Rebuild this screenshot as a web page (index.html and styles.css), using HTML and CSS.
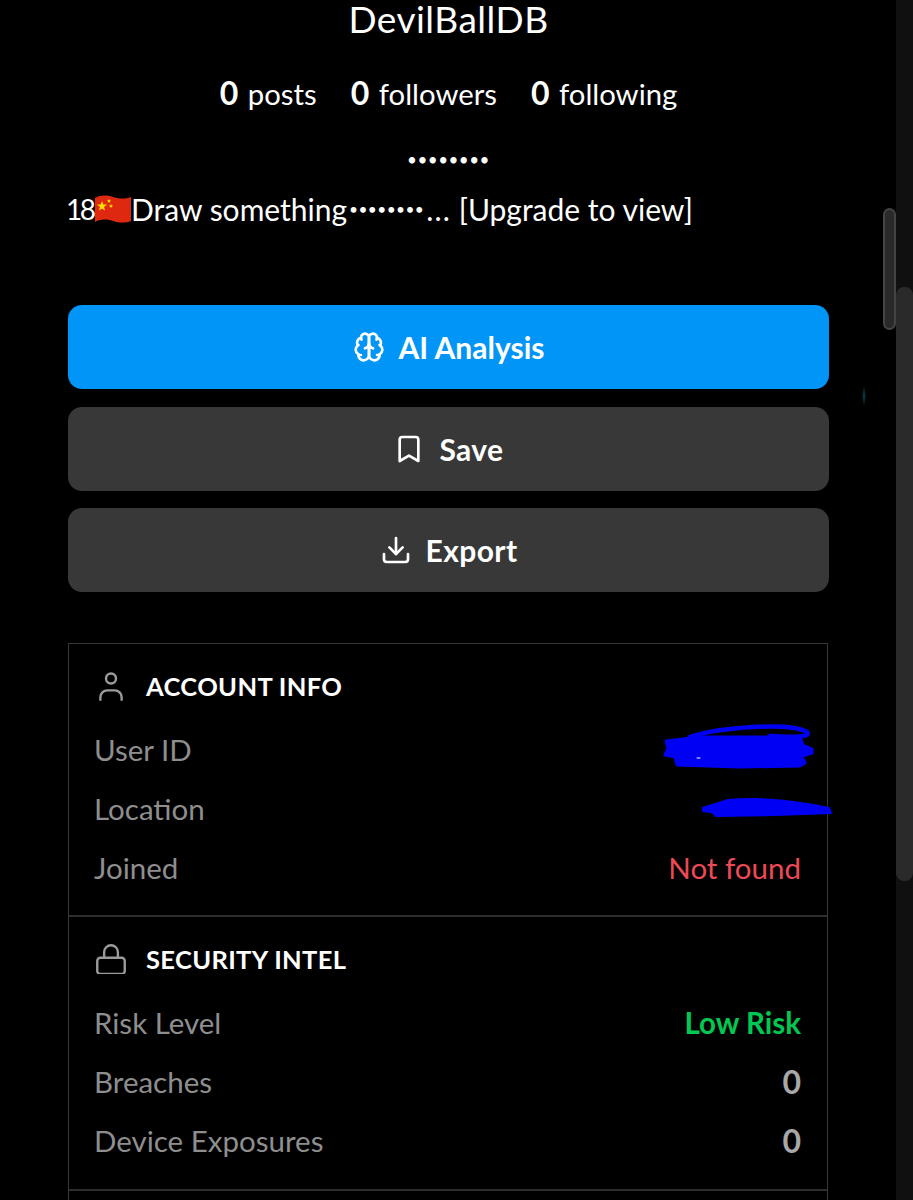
FILE: index.html
```html
<!DOCTYPE html>
<html lang="en">
<head>
<meta charset="utf-8">
<title>DevilBallDB</title>
<link rel="stylesheet" href="styles.css">
</head>
<body>
<div class="page">
  <main class="content">
    <h1 class="name">DevilBallDB</h1>
    <div class="stats">
      <span><b>0</b> posts</span>
      <span><b>0</b> followers</span>
      <span><b>0</b> following</span>
    </div>
    <p class="handle">••••••••</p>
    <p class="bio"><span class="num">18</span><svg class="flag" viewBox="0 0 36 30"><path fill="#de2910" d="M0 4c6-3 11-3 18-1s12 2 18 0v24c-6 2-11 2-18 0s-12-2-18 1z"/><path fill="#ffde00" d="M7 7l1.300 3.600h3.700l-3 2.300 1.100 3.700L7 14.400l-3.100 2.200 1.100-3.700-3-2.300h3.700zM14 5l.6 1.300 1.400.1-1 1 .3 1.400-1.300-.7-1.200.7.200-1.400-1-1 1.400-.1zM16 10l.6 1.300 1.400.1-1 1 .3 1.400-1.300-.7-1.200.7.200-1.400-1-1 1.400-.1z"/></svg>Draw something<span class="dots">••••••••</span><span class="ellipsis">...</span>&nbsp;[Upgrade to view]</p>

    <div class="actions">
      <button class="btn primary">
        <svg class="ic" viewBox="0 0 24 24" fill="none" stroke="currentColor" stroke-width="2" stroke-linecap="round" stroke-linejoin="round"><path d="M12 5a3 3 0 1 0-5.997.125 4 4 0 0 0-2.526 5.770 4 4 0 0 0 .556 6.588A4 4 0 1 0 12 18Z"/><path d="M12 5a3 3 0 1 1 5.997.125 4 4 0 0 1 2.526 5.770 4 4 0 0 1-.556 6.588A4 4 0 1 1 12 18Z"/><path d="M15 13a4.170 4.170 0 0 1-3-4 4.170 4.170 0 0 1-3 4"/><path d="M17.599 6.500a3 3 0 0 0 .399-1.375"/><path d="M6.003 5.125A3 3 0 0 0 6.401 6.500"/><path d="M3.477 10.896a4 4 0 0 1 .585-.396"/><path d="M19.938 10.500a4 4 0 0 1 .585.396"/><path d="M6 18a4 4 0 0 1-1.967-.516"/><path d="M19.967 17.484A4 4 0 0 1 18 18"/></svg>
        AI Analysis
      </button>
      <button class="btn">
        <svg class="ic" viewBox="0 0 24 24" fill="none" stroke="currentColor" stroke-width="2" stroke-linecap="round" stroke-linejoin="round"><path d="m19 21-7-4-7 4V5a2 2 0 0 1 2-2h10a2 2 0 0 1 2 2v16z"/></svg>
        Save
      </button>
      <button class="btn">
        <svg class="ic" viewBox="0 0 24 24" fill="none" stroke="currentColor" stroke-width="2" stroke-linecap="round" stroke-linejoin="round"><path d="M21 15v4a2 2 0 0 1-2 2H5a2 2 0 0 1-2-2v-4"/><path d="m7 10 5 5 5-5"/><path d="M12 15V3"/></svg>
        Export
      </button>
    </div>

    <section class="card">
      <div class="panel">
        <h2 class="panel-title"><svg class="ic-title" viewBox="0 0 24 24" fill="none" stroke="currentColor" stroke-width="1.900" stroke-linecap="round" stroke-linejoin="round"><circle cx="12" cy="6" r="4"/><path d="M3.500 23v-2a5.500 5.500 0 0 1 5.500-5.500h6a5.500 5.500 0 0 1 5.500 5.500v2"/></svg>ACCOUNT INFO</h2>
        <div class="row"><span class="label">User ID</span></div>
        <div class="row"><span class="label">Location</span></div>
        <div class="row"><span class="label">Joined</span><span class="val-red">Not found</span></div>
      </div>
      <div class="panel second">
        <h2 class="panel-title"><svg class="ic-title" viewBox="0 0 24 24" fill="none" stroke="currentColor" stroke-width="1.900" stroke-linecap="round" stroke-linejoin="round"><rect x="1" y="11" width="22" height="13" rx="2.500"/><path d="M6.500 11V6.500a5.500 5.500 0 0 1 11 0V11"/></svg>SECURITY INTEL</h2>
        <div class="row"><span class="label">Risk Level</span><span class="val-green">Low Risk</span></div>
        <div class="row"><span class="label">Breaches</span><span class="val">0</span></div>
        <div class="row"><span class="label">Device Exposures</span><span class="val">0</span></div>
      </div>
      <div class="panel-next"></div>
    </section>
  </main>

  <svg class="scribble" viewBox="0 0 913 1200" fill="#0000f5" stroke="#0000f5" stroke-linecap="round" stroke-linejoin="round">
    <path fill="none" stroke-width="4.500" d="M690 737C720 727 790 722 807 732C811 738 795 737 770 736"/>
    <path stroke-width="3" d="M666 741L700 737L800 737L803 745L812 749L812 753L802 756L805 763L800 766L740 767L677 765L675 757L665 755L668 748Z"/>
    <path stroke-width="2" d="M703 808L728 800C760 797 790 800 829 808L831 813L775 815L716 816L712 812L703 811Z"/>
    <path fill="none" stroke="#fff" stroke-width="1" d="M697 758h3"/>
  </svg>
  <div class="glow"></div>
  <div class="inner-thumb"></div>
  <div class="rail"><div class="rail-thumb"></div></div>
</div>
</body>
</html>
```

FILE: styles.css
```css
* { box-sizing: border-box; }
html, body { margin: 0; height: 100%; background: #000; overflow: hidden; }
body { font-family: "Lato", "Inter", "Liberation Sans", sans-serif; color: #fff; }
.page { position: relative; height: 1200px; overflow: hidden; }
.content { width: 761px; margin-left: 68px; display: flex; flex-direction: column; }
.name { margin: 0; height: 38px; font-size: 37px; font-weight: 400; line-height: 38px; text-align: center; letter-spacing: .5px; }
.stats { margin-top: 34px; display: flex; justify-content: center; gap: 34px; font-size: 29.300px; line-height: 42px; }
.stats b { font-weight: 700; font-size: 32px; margin-right: 2px; }
.handle { margin: 31px 0 0; height: 28px; font-size: 17px; line-height: 28px; text-align: center; letter-spacing: .5px; }
.bio { margin: 17px 0 0; height: 36px; font-size: 30px; line-height: 36px; white-space: nowrap; display: flex; align-items: center; }
.num { font-size: 28px; letter-spacing: -2.500px; width: 29px; margin-left: -2px; }
.flag { width: 36px; height: 30px; flex: none; }
.dots { font-size: 15.500px; letter-spacing: .4px; margin: 0 2px; }
.ellipsis { letter-spacing: 1.200px; }
.actions { margin-top: 78px; display: flex; flex-direction: column; gap: 17.500px; }
.btn { height: 84px; border: 0; border-radius: 14px; background: #383838; color: #fff; font: 700 30px "Lato", sans-serif; letter-spacing: .4px; display: flex; align-items: center; justify-content: center; gap: 14px; padding: 0; }
.primary { background: #0095f6; letter-spacing: 0; }
.ic { width: 32px; height: 32px; flex: none; }
.card { margin-top: 51px; width: 760px; border: 1px solid #383838; border-bottom: 0; }
.panel { padding: 22px 26px 18.500px 25px; border-bottom: 2px solid #2e2e2e; }
.second { padding-top: 21.500px; }
.panel-next { height: 40px; }
.panel-title { margin: 0 0 13.500px; height: 40px; display: flex; align-items: center; font-size: 25.500px; font-weight: 700; line-height: 40px; letter-spacing: .35px; }
.second .panel-title { margin-bottom: 14.500px; }
.ic-title { width: 30px; height: 30px; flex: none; margin: 0 20px 0 2px; color: #9b9b9b; }
.row { display: flex; justify-content: space-between; align-items: center; height: 59px; font-size: 29.500px; }
.label { color: #8e8e8e; }
.val-red { color: #ed4956; }
.val-green { color: #00c853; font-weight: 700; }
.val { color: #a8a8a8; font-weight: 700; font-size: 32px; }
.scribble { position: absolute; inset: 0; width: 913px; height: 1200px; pointer-events: none; }
.glow { position: absolute; left: 862px; top: 386px; width: 4px; height: 20px; background: radial-gradient(closest-side, #0d4a50, transparent); }
.inner-thumb { position: absolute; left: 883px; top: 208px; width: 13px; height: 122px; border-radius: 7px; background: #2a2a2a; border: 2px solid #444; }
.rail { position: absolute; left: 896px; top: 0; width: 17px; height: 1200px; background: #101010; }
.rail-thumb { position: absolute; left: 0; top: 287px; width: 17px; height: 594px; border-radius: 8px; background: #2a2a2a; }
```
